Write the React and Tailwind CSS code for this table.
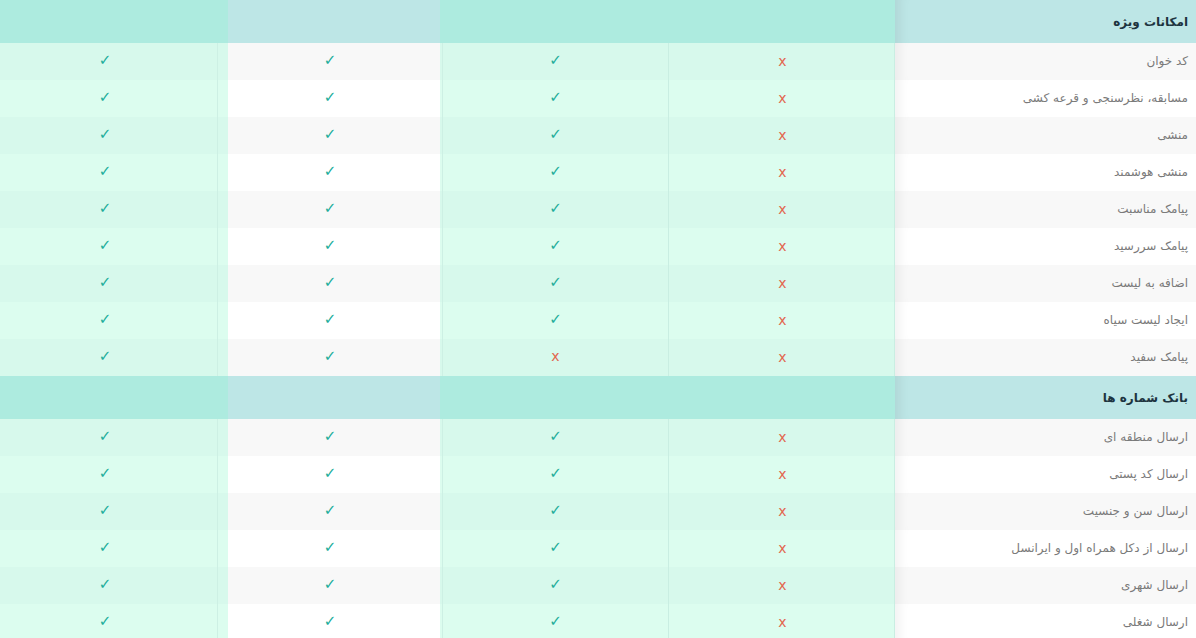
const sections = [
  {
    title: "امکانات ویژه",
    rows: [
      ["کد خوان", false, true, true, true],
      ["مسابقه، نظرسنجی و قرعه کشی", false, true, true, true],
      ["منشی", false, true, true, true],
      ["منشی هوشمند", false, true, true, true],
      ["پیامک مناسبت", false, true, true, true],
      ["پیامک سررسید", false, true, true, true],
      ["اضافه به لیست", false, true, true, true],
      ["ایجاد لیست سیاه", false, true, true, true],
      ["پیامک سفید", false, false, true, true],
    ],
  },
  {
    title: "بانک شماره ها",
    rows: [
      ["ارسال منطقه ای", false, true, true, true],
      ["ارسال کد پستی", false, true, true, true],
      ["ارسال سن و جنسیت", false, true, true, true],
      ["ارسال از دکل همراه اول و ایرانسل", false, true, true, true],
      ["ارسال شهری", false, true, true, true],
      ["ارسال شغلی", false, true, true, true],
    ],
  },
];

const Mark = ({ ok }) =>
  ok ? (
    <span className="text-[15px] font-bold leading-none text-[#22ad9a]">✓</span>
  ) : (
    <span className="text-[14px] leading-none text-[#e2674f] pb-[2px]">x</span>
  );

const Header = ({ title }) => (
  <div className="grid grid-cols-[301px_227px_228px_212px_228px] h-[43px]">
    <div className="flex items-center pr-2 bg-[#bde6e6] shadow-[inset_14px_0_12px_-10px_rgba(0,0,0,0.08)] text-[12px] font-bold text-[#1d3440]">
      {title}
    </div>
    <div className="bg-[#adebdf]" />
    <div className="bg-[#adebdf]" />
    <div className="bg-[#bde6e6]" />
    <div className="bg-[#adebdf]" />
  </div>
);

const Row = ({ row, odd }) => {
  const [label, a, b, c, d] = row;
  const plain = odd ? "bg-[#f8f8f8]" : "bg-white";
  const green = odd ? "bg-[#d7f9ec]" : "bg-[#dcfdef]";
  return (
    <div className="grid grid-cols-[301px_227px_228px_212px_228px] h-[37px]">
      <div
        className={`flex items-center pr-2 pb-[2px] text-[12px] text-[#7a7a7a] shadow-[inset_14px_0_12px_-10px_rgba(0,0,0,0.06)] ${plain}`}
      >
        {label}
      </div>
      <div className={`flex items-center justify-center pl-[2px] border-x border-[#c9eee2] ${green}`}>
        <Mark ok={a} />
      </div>
      <div className={`flex items-center justify-center ${green}`}>
        <div className="flex-1 flex justify-center pb-[2px]">
          <Mark ok={b} />
        </div>
        <div className="w-px self-stretch bg-[#cdf0e4]" />
        <div className="w-[2px]" />
      </div>
      <div className={`flex items-center justify-center pr-[8px] pb-[2px] ${plain}`}>
        <Mark ok={c} />
      </div>
      <div className={`flex items-stretch ${green}`}>
        <div className="w-[10px]" />
        <div className="w-px bg-[#cdf0e4]" />
        <div className="flex-1 flex items-center justify-center pr-[7px] pb-[2px]">
          <Mark ok={d} />
        </div>
      </div>
    </div>
  );
};

export default function App() {
  return (
    <div
      dir="rtl"
      className="w-[1196px] h-[638px] overflow-hidden bg-white"
      style={{ fontFamily: '"DejaVu Sans", sans-serif' }}
    >
      {sections.map((s) => (
        <div key={s.title}>
          <Header title={s.title} />
          {s.rows.map((r, i) => (
            <Row key={r[0]} row={r} odd={i % 2 === 0} />
          ))}
        </div>
      ))}
    </div>
  );
}
